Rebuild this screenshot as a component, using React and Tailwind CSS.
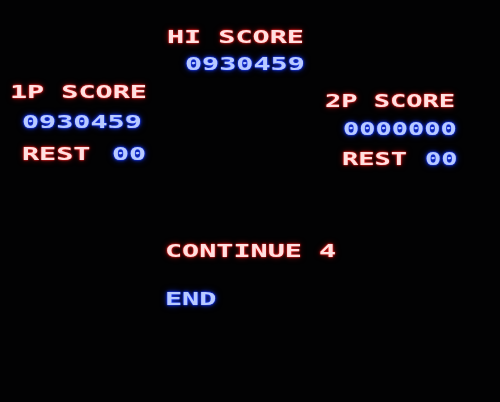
import React from 'react';

// CRT glow for the two phosphor colours
const RED =
  'text-[#ffe0e0] [text-shadow:0_0_1px_#ff2a2a,0_0_2px_#ff2020,0_0_5px_rgba(255,30,30,0.55)]';
const BLUE =
  'text-[#b8caff] [text-shadow:0_0_1px_#2040ff,0_0_1px_#2040ff,0_0_3px_#1838ff,0_0_6px_rgba(30,60,255,0.6)]';

function Line({ color, narrow = false, className = '', children }) {
  return (
    <div className={`h-[19px] ${className}`}>
      <span
        className={`inline-block origin-left whitespace-pre font-bold text-[18px] leading-none ${narrow ? 'scale-x-[1.5]' : 'scale-x-[1.58]'} ${color}`}
        style={{ fontFamily: '"DejaVu Sans Mono", "Liberation Mono", monospace' }}
      >
        {children}
      </span>
    </div>
  );
}

export default function App() {
  return (
    <div className="w-[500px] h-[402px] overflow-hidden bg-[#020203] pt-[25px] blur-[0.3px]">
      {/* top score */}
      <Line color={RED} className="pl-[167px]">HI SCORE</Line>
      <Line color={BLUE} className="pl-[185px] mt-[8px]">0930459</Line>

      {/* player columns */}
      <div className="flex mt-[9px]">
        <div className="flex flex-col w-[325px]">
          <Line color={RED} className="pl-[10px]">1P SCORE</Line>
          <Line color={BLUE} className="pl-[22px] mt-[11px]">0930459</Line>
          <div className="flex pl-[22px] mt-[13px] h-[19px]">
            <Line color={RED} className="w-[90px]">REST</Line>
            <Line color={BLUE}>00</Line>
          </div>
        </div>
        <div className="flex flex-col pt-[9px]">
          <Line color={RED} narrow>2P SCORE</Line>
          <Line color={BLUE} narrow className="pl-[18px] mt-[9px]">0000000</Line>
          <div className="flex pl-[17px] mt-[11px] h-[19px]">
            <Line color={RED} narrow className="w-[83px]">REST</Line>
            <Line color={BLUE} narrow>00</Line>
          </div>
        </div>
      </div>

      {/* continue menu */}
      <Line color={RED} className="pl-[165px] mt-[73px]">CONTINUE 4</Line>
      <Line color={BLUE} className="pl-[165px] mt-[29px]">END</Line>
    </div>
  );
}
